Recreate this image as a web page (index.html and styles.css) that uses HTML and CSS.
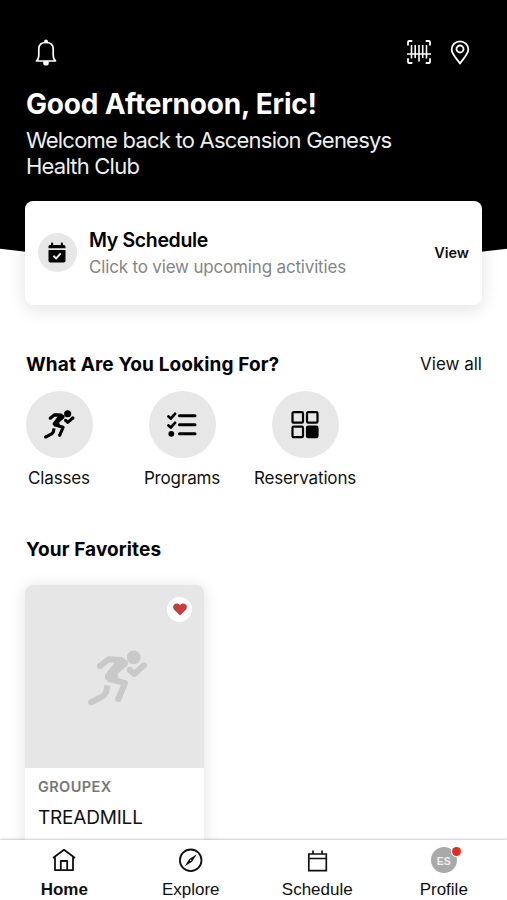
FILE: index.html
```html
<!DOCTYPE html>
<html lang="en">
<head>
    <meta charset="UTF-8">
    <meta name="viewport" content="width=device-width, initial-scale=1.0">
    <title>Home</title>
    <link rel="stylesheet" href="styles.css">
</head>
<body>

    <svg class="sprite">
        <symbol id="runner" viewBox="0 0 60 56">
            <circle cx="45.8" cy="7.3" r="6.9" fill="currentColor"/>
            <path d="M12 16 L20.5 9.3 L35 10.3 M20 28.5 L37 33.2 L30.3 49 M19.3 35.5 L18.3 42 L15.5 45.8 L3 52.5 M41.5 19.5 L46 24 L56 15.2" fill="none" stroke="currentColor" stroke-width="6" stroke-linejoin="round"/>
            <path d="M12 16 h.01 M30.3 49 h.01 M3 52.3 h.01 M56 15.2 h.01 M41.7 19.7 h.01" stroke="currentColor" stroke-width="6" stroke-linecap="round"/>
            <path d="M21 6.5 L34 7.3 L40 11 L39.5 15.5 L29.5 24 L30.5 29.5 L21 31.5 L17 29 L17 25 L27 12 Z" fill="currentColor"/>
        </symbol>
    </svg>

    <header class="header">
        <div class="header-icons">
            <svg class="bell" width="22" height="28" viewBox="0 0 22 28">
                <circle cx="11" cy="2.4" r="1.9" fill="#fff"/>
                <path d="M1.5 22 C3.5 20.5 3.8 18.5 3.8 16 V10 C3.8 5.5 7 3.5 11 3.5 S18.2 5.5 18.2 10 V16 C18.2 18.5 18.5 20.5 20.5 22 Z" fill="none" stroke="#fff" stroke-width="1.7" stroke-linejoin="round"/>
                <path d="M8.2 22 H13.8 V24 A2.8 2.6 0 0 1 8.2 24 Z" fill="#fff"/>
            </svg>
            <svg class="barcode" width="24" height="24" viewBox="0 0 24 24" fill="none" stroke="#fff" stroke-width="1.8">
                <path d="M1 5.5 V2.3 Q1 1 2.1 1 H5.3 M18.7 1 H21.9 Q23 1 23 2.3 V5.5 M1 18.3 V21.7 Q1 23 2.1 23 H5.3 M18.7 23 H21.9 Q23 23 23 21.7 V18.3"/>
                <path d="M0 14 H24 M4.5 5 V18.5 M8.2 5 V18 M12 5 V21.5 M15.7 5 V18 M19.5 5 V18.5" stroke-width="1.6"/>
            </svg>
            <svg class="pin" width="20" height="25" viewBox="0 0 20 25" fill="none" stroke="#fff" stroke-width="1.8">
                <path d="M10 23.5 C7.5 19.5 1.7 14.5 1.7 9.6 A8.3 8.3 0 0 1 18.3 9.6 C18.3 14.5 12.5 19.5 10 23.5 Z" stroke-linejoin="round"/>
                <circle cx="10" cy="9" r="3.5"/>
            </svg>
        </div>
        <h1 class="greeting">Good Afternoon, Eric!</h1>
        <p class="welcome">Welcome back to Ascension Genesys<br>Health Club</p>
    </header>

    <main class="content">
        <section class="schedule-card">
            <div class="schedule-icon">
                <svg width="18" height="22" viewBox="0 0 18 22">
                    <path d="M.5 6.3 V4.5 Q.5 3 2 3 H3 V1.5 Q3 .5 4.1 .5 T5.2 1.5 V3 H12.8 V1.5 Q12.8 .5 13.9 .5 T15 1.5 V3 H16 Q17.5 3 17.5 4.5 V6.3 Z M.5 8 H17.5 V18.7 Q17.5 20.5 15.7 20.5 H2.3 Q.5 20.5 .5 18.7 Z" fill="#000"/>
                    <path d="M5.4 13.8 L8.1 16.4 L12.8 11.4" fill="none" stroke="#eee" stroke-width="1.9"/>
                </svg>
            </div>
            <div class="schedule-text">
                <h2>My Schedule</h2>
                <p>Click to view upcoming activities</p>
            </div>
            <a class="schedule-view">View</a>
        </section>

        <div class="section-head">
            <h3>What Are You Looking For?</h3>
            <a class="view-all">View all</a>
        </div>

        <div class="categories">
            <div class="category">
                <div class="circle"><svg width="31" height="29"><use href="#runner"/></svg></div>
                <span>Classes</span>
            </div>
            <div class="category">
                <div class="circle">
                    <svg width="30" height="26" viewBox="0 0 30 26" fill="none" stroke="#000" stroke-linecap="round">
                        <path d="M12.5 3.8 H28 M12.5 12.8 H28 M12.5 21.8 H28" stroke-width="3"/>
                        <path d="M1.5 4.5 L3.8 6.5 L8 1.8 M1.5 13.5 L3.8 15.5 L8 10.8" stroke-width="2.7" stroke-linejoin="round"/>
                        <circle cx="4.3" cy="21.8" r="2.9" fill="#000" stroke="none"/>
                    </svg>
                </div>
                <span>Programs</span>
            </div>
            <div class="category">
                <div class="circle">
                    <svg width="28" height="28" viewBox="0 0 28 28" fill="none" stroke="#000" stroke-width="2.2">
                        <rect x="1.5" y="1.2" width="10.5" height="10.5" rx="1.2"/>
                        <rect x="16" y="1.2" width="10.5" height="10.5" rx="1.2"/>
                        <rect x="1.5" y="15.7" width="10.5" height="10.5" rx="1.2"/>
                        <rect x="16" y="15.7" width="10.5" height="10.5" rx="1.2" fill="#000"/>
                    </svg>
                </div>
                <span>Reservations</span>
            </div>
        </div>

        <h3 class="favorites-title">Your Favorites</h3>
        <article class="favorite">
            <div class="favorite-image">
                <svg width="60" height="56"><use href="#runner"/></svg>
                <div class="heart">
                    <svg width="14" height="13" viewBox="0 0 14 13">
                        <path d="M7 12.5 L1.2 6.7 C-1.3 3.8 .8 .5 3.7 .5 C5.2 .5 6.3 1.2 7 2.2 C7.7 1.2 8.8 .5 10.3 .5 C13.2 .5 15.3 3.8 12.8 6.7 Z" fill="#c83c40"/>
                    </svg>
                </div>
            </div>
            <div class="favorite-type">GROUPEX</div>
            <div class="favorite-name">TREADMILL</div>
        </article>
    </main>

    <nav class="tabbar">
        <a class="tab active">
            <svg width="26" height="26" viewBox="0 0 26 26" fill="none" stroke="#111" stroke-width="1.8">
                <path d="M2 11 L13 2.8 L24 11 M4 9.5 V23.2 H22 V9.5 M9.8 23 V14 H16.2 V23" stroke-linejoin="round"/>
            </svg>
            <span>Home</span>
        </a>
        <a class="tab">
            <svg width="26" height="26" viewBox="0 0 26 26" fill="none">
                <circle cx="12.7" cy="13.3" r="10.8" stroke="#111" stroke-width="1.8"/>
                <path d="M18.7 7.3 L14.1 14.7 L6.7 19.3 L11.3 11.9 Z" fill="#111"/>
                <circle cx="12.7" cy="13.3" r=".7" fill="#fff"/>
            </svg>
            <span>Explore</span>
        </a>
        <a class="tab">
            <svg width="26" height="26" viewBox="0 0 26 26" fill="none" stroke="#111" stroke-width="1.7">
                <path d="M4.8 7 H22.3 V23.7 H4.8 Z M4.8 11.5 H22.3 M9 3.5 V7 M18 3.5 V7"/>
            </svg>
            <span>Schedule</span>
        </a>
        <a class="tab">
            <div class="avatar">ES<i class="dot"></i></div>
            <span>Profile</span>
        </a>
    </nav>

</body>
</html>
```
FILE: styles.css
```css
* {
    box-sizing: border-box;
}
body {
    margin: 0;
    height: 900px;
    overflow: hidden;
    background-color: #fff;
    color: #111;
    font-family: Inter, sans-serif;
    display: flex;
    flex-direction: column;
}
h1, h2, h3, p {
    margin: 0;
}
svg {
    display: block;
    flex-shrink: 0;
}
.sprite {
    position: absolute;
    width: 0;
    height: 0;
}
.header {
    height: 264px;
    flex-shrink: 0;
    padding: 39px 37px 0 26px;
    background-color: #000;
    color: #fff;
    clip-path: circle(2100px at 50% -1836px);
}
.header-icons {
    display: flex;
    align-items: flex-start;
    height: 48px;
    padding-left: 8.5px;
}
.barcode {
    margin: 1px 19px 0 auto;
}
.pin {
    margin-top: 1px;
}
.greeting {
    font-size: 28px;
    line-height: 34px;
    font-weight: 700;
    letter-spacing: -0.2px;
}
.welcome {
    margin-top: 6px;
    font-size: 22px;
    line-height: 26px;
    letter-spacing: -0.78px;
    color: #eee;
}
.content {
    flex: 1;
    min-height: 0;
    padding: 0 25px;
}
.schedule-card {
    position: relative;
    display: flex;
    align-items: center;
    height: 104px;
    margin-top: -63px;
    padding: 0 13px;
    background-color: #fff;
    border-radius: 8px;
    box-shadow: 0 4px 18px rgba(0, 20, 10, 0.12);
}
.schedule-icon {
    display: flex;
    align-items: center;
    justify-content: center;
    width: 39px;
    height: 39px;
    margin-top: -1px;
    border-radius: 50%;
    background-color: #e7e7e7;
}
.schedule-icon svg {
    margin-right: 1px;
}
.schedule-text {
    flex: 1;
    margin-left: 12px;
}
.schedule-text h2 {
    font-size: 19.5px;
    line-height: 27px;
    font-weight: 600;
    letter-spacing: -0.35px;
    color: #000;
}
.schedule-text p {
    font-size: 17px;
    line-height: 26px;
    letter-spacing: -0.17px;
    color: #858585;
}
.schedule-view {
    margin-top: -1px;
    font-size: 14.5px;
    font-weight: 600;
}
.section-head {
    display: flex;
    justify-content: space-between;
    align-items: center;
    height: 24px;
    margin-top: 48px;
}
h3 {
    padding-left: 1px;
    font-size: 19px;
    line-height: 24px;
    font-weight: 700;
    letter-spacing: 0.12px;
    color: #000;
}
.view-all {
    margin-top: -2px;
    font-size: 17px;
}
.categories {
    display: flex;
    gap: 56px;
    margin-top: 14px;
    padding-left: 0.5px;
}
.category {
    display: flex;
    flex-direction: column;
    align-items: center;
    width: 67px;
    font-size: 17px;
    line-height: 24px;
    letter-spacing: -0.15px;
    white-space: nowrap;
}
.circle {
    display: flex;
    align-items: center;
    justify-content: center;
    width: 67px;
    height: 67px;
    margin-bottom: 8px;
    border-radius: 50%;
    background-color: #e7e7e7;
    color: #000;
}
.favorites-title {
    margin-top: 48px;
}
.favorite {
    width: 179px;
    height: 290px;
    margin-top: 23px;
    border-radius: 8px;
    background-color: #fff;
    box-shadow: 0 2px 16px rgba(0, 20, 10, 0.13);
}
.favorite-image {
    position: relative;
    display: flex;
    align-items: center;
    justify-content: center;
    height: 183px;
    padding-left: 6px;
    padding-top: 3px;
    border-radius: 8px 8px 0 0;
    background-color: #e6e6e6;
    color: #c9c9c9;
}
.heart {
    position: absolute;
    top: 12px;
    right: 12px;
    display: flex;
    align-items: center;
    justify-content: center;
    width: 25px;
    height: 25px;
    border-radius: 50%;
    background-color: #fff;
}
.favorite-type {
    margin: 9px 0 0 13px;
    font-size: 14.5px;
    line-height: 20px;
    font-weight: 600;
    letter-spacing: 0.4px;
    color: #777;
}
.favorite-name {
    margin: 9px 0 0 13px;
    font-size: 19px;
    line-height: 24px;
    letter-spacing: -0.2px;
}
.tabbar {
    position: relative;
    display: flex;
    height: 60px;
    flex-shrink: 0;
    padding-left: 1px;
    background-color: #fff;
    box-shadow: 0 -1px 2px rgba(0, 0, 0, 0.2);
}
.tab {
    flex: 1;
    display: flex;
    flex-direction: column;
    align-items: center;
    padding-top: 7px;
    font-family: "Liberation Sans", Arial, sans-serif;
    font-size: 17px;
    line-height: 20px;
}
.tab span {
    margin-top: 7px;
}
.tab.active {
    font-weight: 700;
}
.avatar {
    position: relative;
    width: 26px;
    height: 26px;
    border-radius: 50%;
    background-color: #a9a9a9;
    color: #eee;
    font-size: 10.5px;
    line-height: 28px;
    font-weight: 700;
    text-align: center;
}
.dot {
    position: absolute;
    top: 0;
    right: -4px;
    width: 9px;
    height: 9px;
    border-radius: 50%;
    background-color: #e8291f;
    box-shadow: 0 0 0 1px #fff;
}
```
